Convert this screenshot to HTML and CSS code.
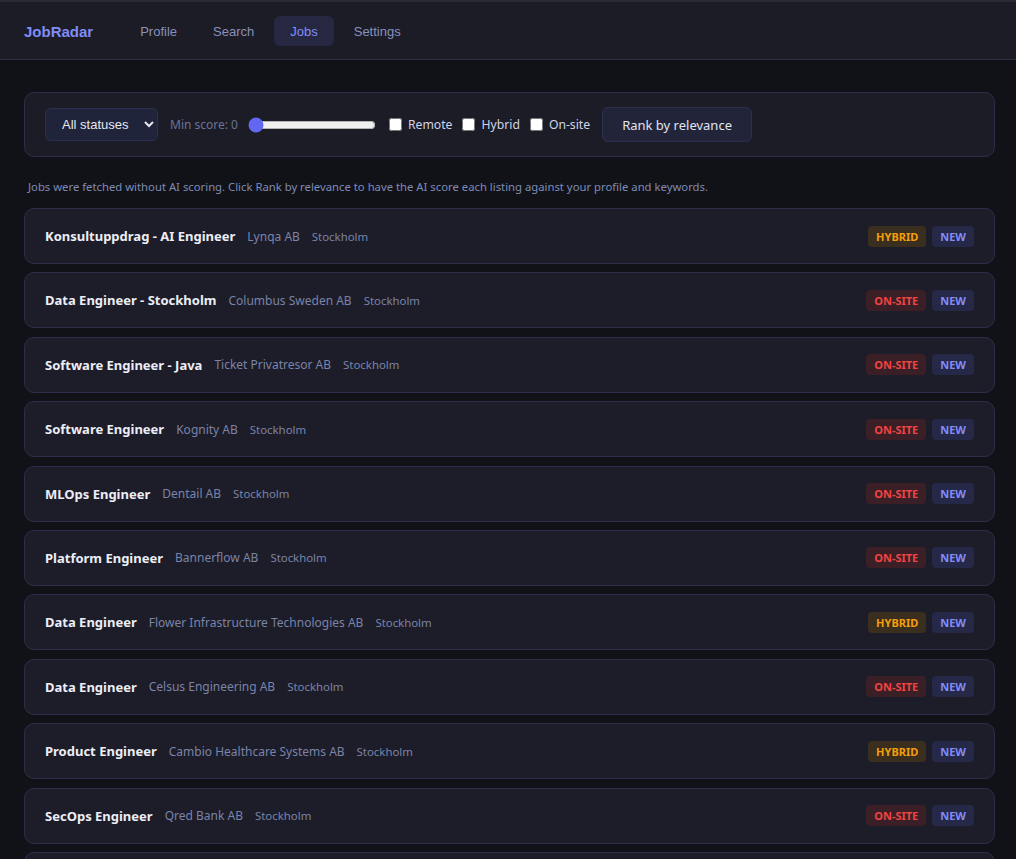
FILE: index.html
```html
<!DOCTYPE html>
<html lang="en">
<head>
    <meta charset="UTF-8">
    <meta name="viewport" content="width=device-width, initial-scale=1.0">
    <title>JobRadar</title>
    <link rel="stylesheet" href="styles.css">
</head>
<body>
<header class="topbar">
    <div class="logo">JobRadar</div>
    <nav class="nav">
        <button class="nav-btn">Profile</button>
        <button class="nav-btn">Search</button>
        <button class="nav-btn active">Jobs</button>
        <button class="nav-btn">Settings</button>
    </nav>
</header>

<main class="page">
    <div class="filters">
        <select class="status-select">
            <option>All statuses</option>
            <option>New</option>
            <option>Applied</option>
        </select>
        <span class="score-label">Min score: 0</span>
        <input type="range" class="score-range" min="0" max="100" value="0">
        <label class="check"><input type="checkbox">Remote</label>
        <label class="check"><input type="checkbox">Hybrid</label>
        <label class="check"><input type="checkbox">On-site</label>
        <button class="rank-btn">Rank by relevance</button>
    </div>

    <p class="hint">Jobs were fetched without AI scoring. Click Rank by relevance to have the AI score each listing against your profile and keywords.</p>

    <div class="jobs">
        <div class="job">
            <span class="job-title">Konsultuppdrag - AI Engineer</span>
            <span class="job-company">Lynqa AB</span>
            <span class="job-loc">Stockholm</span>
            <span class="badges"><span class="badge hybrid">HYBRID</span><span class="badge new">NEW</span></span>
        </div>
        <div class="job">
            <span class="job-title">Data Engineer - Stockholm</span>
            <span class="job-company">Columbus Sweden AB</span>
            <span class="job-loc">Stockholm</span>
            <span class="badges"><span class="badge onsite">ON-SITE</span><span class="badge new">NEW</span></span>
        </div>
        <div class="job">
            <span class="job-title">Software Engineer - Java</span>
            <span class="job-company">Ticket Privatresor AB</span>
            <span class="job-loc">Stockholm</span>
            <span class="badges"><span class="badge onsite">ON-SITE</span><span class="badge new">NEW</span></span>
        </div>
        <div class="job">
            <span class="job-title">Software Engineer</span>
            <span class="job-company">Kognity AB</span>
            <span class="job-loc">Stockholm</span>
            <span class="badges"><span class="badge onsite">ON-SITE</span><span class="badge new">NEW</span></span>
        </div>
        <div class="job">
            <span class="job-title">MLOps Engineer</span>
            <span class="job-company">Dentail AB</span>
            <span class="job-loc">Stockholm</span>
            <span class="badges"><span class="badge onsite">ON-SITE</span><span class="badge new">NEW</span></span>
        </div>
        <div class="job">
            <span class="job-title">Platform Engineer</span>
            <span class="job-company">Bannerflow AB</span>
            <span class="job-loc">Stockholm</span>
            <span class="badges"><span class="badge onsite">ON-SITE</span><span class="badge new">NEW</span></span>
        </div>
        <div class="job">
            <span class="job-title">Data Engineer</span>
            <span class="job-company">Flower Infrastructure Technologies AB</span>
            <span class="job-loc">Stockholm</span>
            <span class="badges"><span class="badge hybrid">HYBRID</span><span class="badge new">NEW</span></span>
        </div>
        <div class="job">
            <span class="job-title">Data Engineer</span>
            <span class="job-company">Celsus Engineering AB</span>
            <span class="job-loc">Stockholm</span>
            <span class="badges"><span class="badge onsite">ON-SITE</span><span class="badge new">NEW</span></span>
        </div>
        <div class="job">
            <span class="job-title">Product Engineer</span>
            <span class="job-company">Cambio Healthcare Systems AB</span>
            <span class="job-loc">Stockholm</span>
            <span class="badges"><span class="badge hybrid">HYBRID</span><span class="badge new">NEW</span></span>
        </div>
        <div class="job">
            <span class="job-title">SecOps Engineer</span>
            <span class="job-company">Qred Bank AB</span>
            <span class="job-loc">Stockholm</span>
            <span class="badges"><span class="badge onsite">ON-SITE</span><span class="badge new">NEW</span></span>
        </div>
        <div class="job job-partial"></div>
    </div>
</main>
</body>
</html>
```

FILE: styles.css
```css
body{
    margin: 0;
    background: #111218;
    color: #e4e6f0;
    font-family: "Noto Sans", sans-serif;
}
.topbar{
    display: flex;
    align-items: center;
    gap: 31px;
    padding: 14px 24px 13px;
    background: #1b1c26;
    border-top: 2px solid #2a2b33;
    border-bottom: 1px solid #2c2f45;
}
.logo{
    font-family: "Liberation Sans", Arial, sans-serif;
    font-weight: 700;
    font-size: 15px;
    color: #818cf8;
}
.nav{
    display: flex;
    gap: 4px;
}
.nav-btn{
    height: 30px;
    padding: 0 16px;
    border: none;
    border-radius: 6px;
    background: transparent;
    color: #8a91b8;
    font-family: "Liberation Sans", Arial, sans-serif;
    font-size: 13px;
}
.nav-btn.active{
    background: #262842;
    color: #818cf8;
}
.page{
    height: 799px;
    overflow: hidden;
    padding: 32px 21px 0 24px;
}
.filters{
    display: flex;
    align-items: center;
    gap: 10px;
    padding: 14px 20px;
    background: #1b1c26;
    border: 1px solid #2c2f4a;
    border-radius: 10px;
}
.status-select{
    color-scheme: dark;
    width: 113px;
    height: 33px;
    padding: 0 8px 0 12px;
    background: #20243a;
    color: #e5e7f0;
    border: 1px solid #2c3050;
    border-radius: 6px;
    font-family: "Liberation Sans", Arial, sans-serif;
    font-size: 13px;
}
.score-label{
    margin-left: 2px;
    font-size: 12px;
    color: #6b7396;
}
.score-range{
    width: 128px;
    margin: 0 3px 0 0;
    accent-color: #6366f1;
}
.check{
    display: flex;
    align-items: center;
    gap: 6px;
    font-size: 12.2px;
    color: #d0d4e8;
}
.check input{
    margin: 0;
    width: 13px;
    height: 13px;
}
.rank-btn{
    margin-left: 2px;
    height: 35px;
    padding: 0 19px;
    background: #222539;
    color: #e0e3f0;
    border: 1px solid #2c3050;
    border-radius: 6px;
    font-family: "Noto Sans", sans-serif;
    font-size: 13px;
}
.hint{
    margin: 22px 4px 14px;
    font-size: 11.3px;
    color: #7f8bb5;
}
.jobs{
    display: flex;
    flex-direction: column;
    gap: 8.4px;
}
.job{
    display: flex;
    align-items: center;
    flex-shrink: 0;
    height: 56px;
    box-sizing: border-box;
    padding: 0 20px;
    background: #1c1d29;
    border: 1px solid #2c2f4a;
    border-radius: 10px;
}
.job-title{
    font-size: 13px;
    font-weight: 700;
    color: #eceef6;
}
.job-company{
    margin-left: 12px;
    font-size: 12px;
    color: #7b83a8;
}
.job-loc{
    margin-left: 12px;
    font-size: 11.4px;
    color: #7b83a8;
}
.badges{
    margin-left: auto;
    display: flex;
    gap: 6px;
}
.badge{
    padding: 3px 8px;
    border-radius: 4px;
    font-size: 11px;
    font-weight: 700;
}
.badge.hybrid{
    background: #3a2e1f;
    color: #f59e0b;
}
.badge.onsite{
    background: #3b1f26;
    color: #ef4444;
}
.badge.new{
    background: #262847;
    color: #818cf8;
}
```
